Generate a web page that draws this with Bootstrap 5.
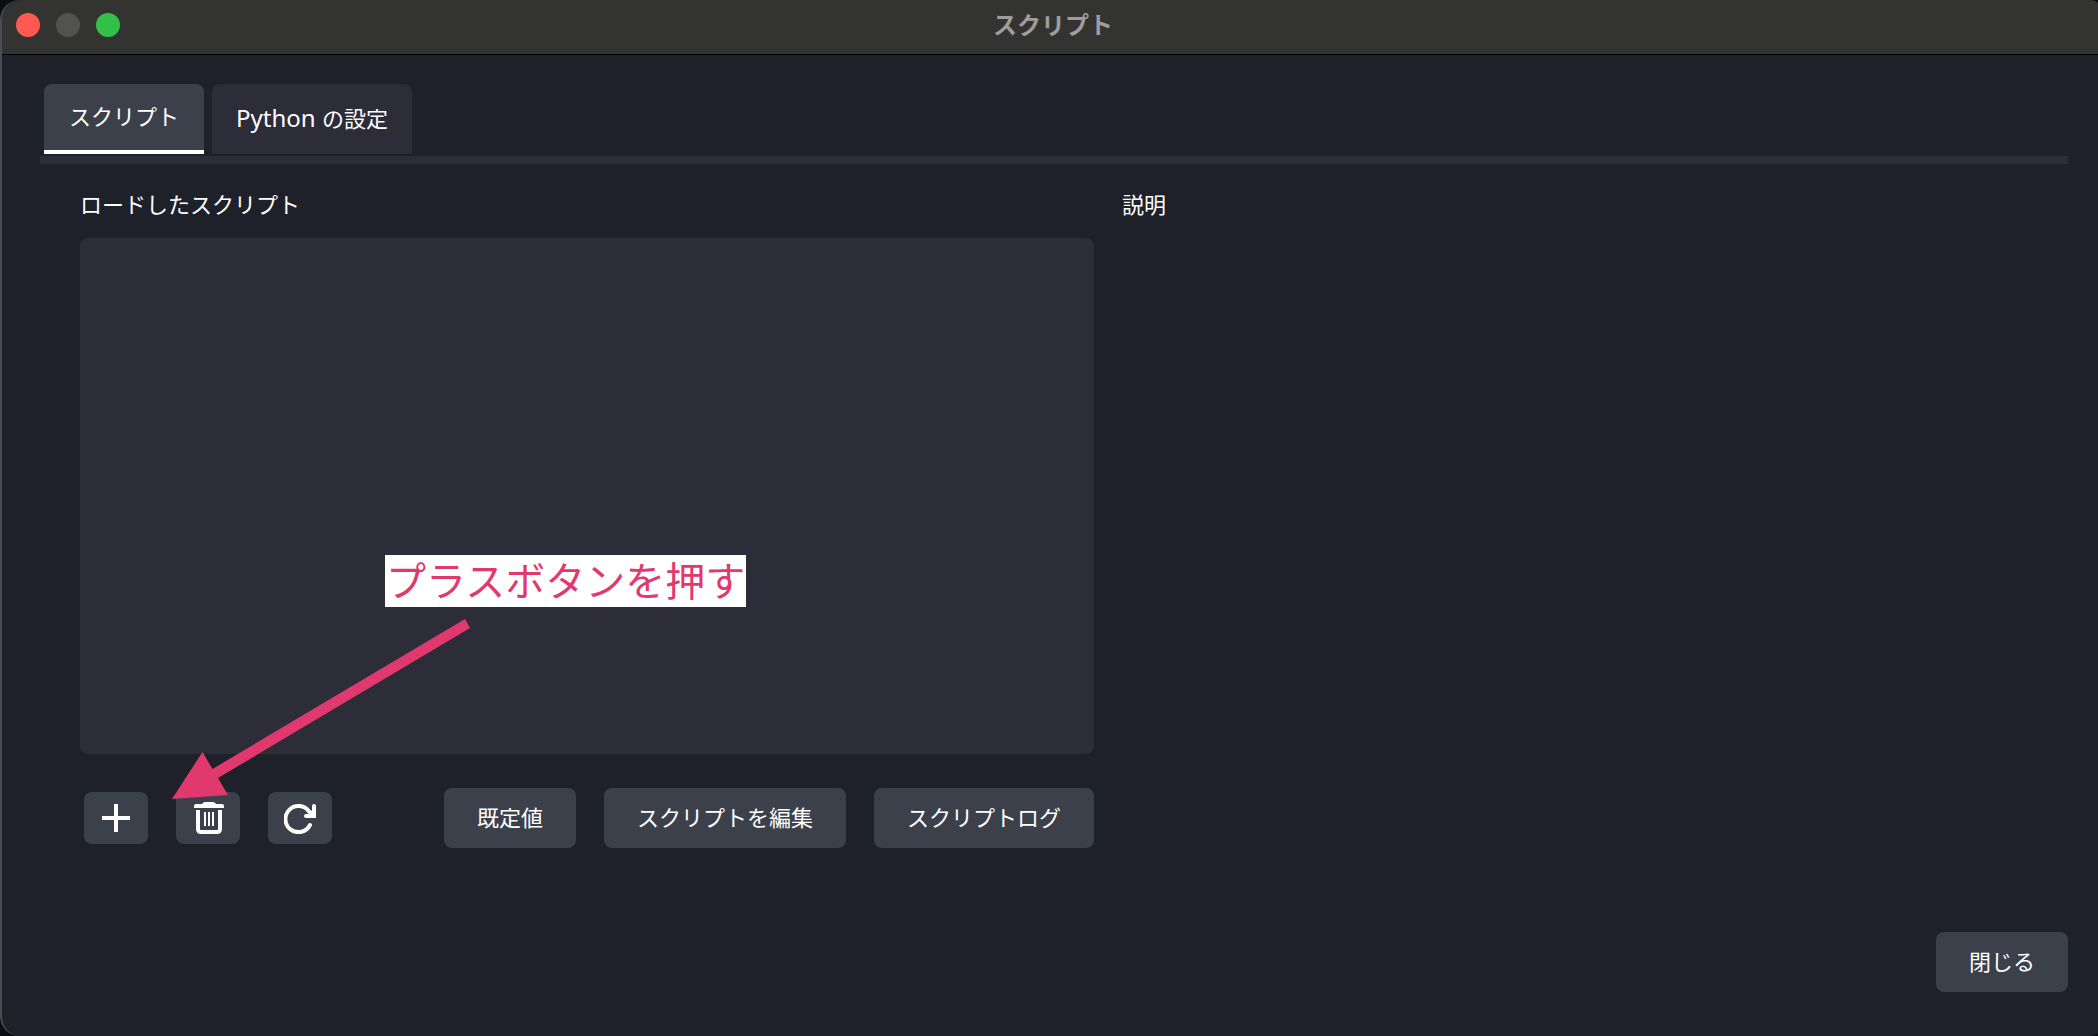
<!DOCTYPE html>
<html lang="ja">
<head>
<meta charset="utf-8">
<meta name="viewport" content="width=device-width, initial-scale=1">
<title>スクリプト</title>
<link href="https://cdn.jsdelivr.net/npm/bootstrap@5.3.0/dist/css/bootstrap.min.css" rel="stylesheet">
<style>
  body { background: #0c0d10; color: #fefefe; font-family: "Noto Sans", "Noto Sans CJK JP", sans-serif; font-size: 22px; line-height: 30px; }
  .app-window { background: #1f212a; border-left: 2px solid #4b4c53; border-radius: 20px 10px 10px 20px / 20px 3px 3px 20px; }
  .title-bar { height: 55px; background: #333331; border-bottom: 1px solid #000; padding: 0 8px 4px 14px; }
  .title-bar h1 { font-size: 24px; line-height: 32px; color: #9d9d9b; }
  .light { width: 24px; height: 24px; border: 0; padding: 0; border-radius: 50%; }
  .light-close { background: #ff5a52; }
  .light-min { background: #52524f; }
  .light-zoom { background: #32c146; }
  .lights { width: 104px; gap: 16px; }
  .window-main { padding: 29px 30px 44px 38px; }
  .script-tabs { gap: 8px; padding: 0 4px 2px; border-bottom: 8px solid #2c2d39; }
  .script-tabs .nav-link { height: 70px; padding: 0 24px 2px; border: 0; border-radius: 8px 8px 0 0; background: #2c2d39; color: #fefefe; }
  .script-tabs .nav-link.active { background: #3c404b; color: #fefefe; border-bottom: 4px solid #fff; padding: 0 25px 2px; }
  .latin-name { font-size: 24px; }
  .script-grid { display: grid; grid-template-columns: 1014fr 946fr; gap: 28px; padding: 25px 0 84px 40px; }
  .section-title { font-size: 22px; line-height: 30px; font-weight: 400; margin: 0 0 19px; }
  .script-list { background: #2c2d39; border-radius: 8px; }
  .tool-row { padding-top: 34px; }
  .tool-set { gap: 28px; padding-left: 4px; }
  .action-set { gap: 28px; }
  .btn-obs { --bs-btn-bg: #3c404b; --bs-btn-color: #fefefe; --bs-btn-border-width: 0; --bs-btn-hover-bg: #4a4e5b; --bs-btn-hover-color: #fff; --bs-btn-active-bg: #2c2d39; --bs-btn-active-color: #fff; --bs-btn-border-radius: 8px; --bs-btn-font-size: 22px; --bs-btn-line-height: 30px; --bs-btn-padding-x: 33px; padding-top: 14px; padding-bottom: 16px; }
  .btn-tool { width: 64px; height: 52px; padding: 0; }
  .note-label { left: 305px; bottom: 147px; padding: 0 1px; background: #fff; color: #e1396d; font-size: 40px; line-height: 52px; font-weight: 400; }
  .note-arrow { left: 80px; bottom: -56px; pointer-events: none; }
</style>
<script src="https://cdn.jsdelivr.net/npm/bootstrap@5.3.0/dist/js/bootstrap.bundle.min.js"></script>
</head>
<body>
<div class="app-window min-vh-100 d-flex flex-column overflow-hidden">
  <header class="title-bar d-flex align-items-center">
    <div class="lights d-flex">
      <button type="button" class="light light-close" aria-label="閉じる"></button>
      <button type="button" class="light light-min" aria-label="しまう" disabled></button>
      <button type="button" class="light light-zoom" aria-label="拡大"></button>
    </div>
    <h1 class="flex-grow-1 text-center fw-bold m-0">スクリプト</h1>
    <div class="lights"></div>
  </header>

  <main class="window-main flex-grow-1 d-flex flex-column">
    <div class="script-tabs nav" role="tablist">
      <button type="button" class="nav-link active" role="tab" aria-selected="true" aria-controls="scripts-pane" id="scripts-tab">スクリプト</button>
      <button type="button" class="nav-link" role="tab" aria-selected="false"><span class="latin-name">Python </span>の設定</button>
    </div>

    <div class="script-grid flex-grow-1" id="scripts-pane" role="tabpanel" aria-labelledby="scripts-tab">
      <section class="d-flex flex-column">
        <h2 class="section-title">ロードしたスクリプト</h2>
        <div class="script-list flex-grow-1 position-relative">
          <div class="note-label position-absolute text-nowrap">プラスボタンを押す</div>
          <svg class="note-arrow position-absolute z-1" width="320" height="200" viewBox="160 610 320 200" fill="#e1396d" aria-hidden="true">
            <path d="M172 799 202.500 752 212.500 769 465 619 470 628 218 778 228 795Z"/>
          </svg>
        </div>
        <div class="tool-row d-flex justify-content-between align-items-center">
          <div class="tool-set d-flex">
            <button type="button" class="btn btn-obs btn-tool d-flex align-items-center justify-content-center" aria-label="追加">
              <svg width="28" height="28" viewBox="0 0 28 28" fill="#fefefe"><path d="M12 0h4v12h12v4H16v12h-4V16H0v-4h12z"/></svg>
            </button>
            <button type="button" class="btn btn-obs btn-tool d-flex align-items-center justify-content-center" aria-label="削除">
              <svg width="32" height="32" viewBox="0 0 32 32" fill="none" stroke="#fefefe">
                <path d="M4 2h6q1-2 3-2h8q2 0 3 2h6q2 0 2 2v2H2V4q0-2 2-2z" fill="#fefefe" stroke="none"/>
                <path d="M6 8v19q0 3 3 3h16q3 0 3-3V8" stroke-width="4"/>
                <path d="M13 10v14M17 10v14M21 10v14" stroke-width="2"/>
              </svg>
            </button>
            <button type="button" class="btn btn-obs btn-tool d-flex align-items-center justify-content-center" aria-label="再読み込み">
              <svg width="32" height="32" viewBox="0 0 32 32" fill="none" stroke="#fefefe" stroke-width="4" stroke-linecap="round" stroke-linejoin="round">
                <path d="M26 23A13 13 0 1 1 25 9.500"/>
                <path d="M22 14h8V6z" fill="#fefefe" stroke="none"/>
                <path d="M22 14h8V4"/>
                <path d="M28 12h4v4h-4z" fill="#fefefe" stroke="none"/>
              </svg>
            </button>
          </div>
          <div class="action-set d-flex">
            <button type="button" class="btn btn-obs">既定値</button>
            <button type="button" class="btn btn-obs">スクリプトを編集</button>
            <button type="button" class="btn btn-obs">スクリプトログ</button>
          </div>
        </div>
      </section>
      <section>
        <h2 class="section-title">説明</h2>
      </section>
    </div>

    <div class="d-flex justify-content-end">
      <button type="button" class="btn btn-obs">閉じる</button>
    </div>
  </main>
</div>
</body>
</html>
